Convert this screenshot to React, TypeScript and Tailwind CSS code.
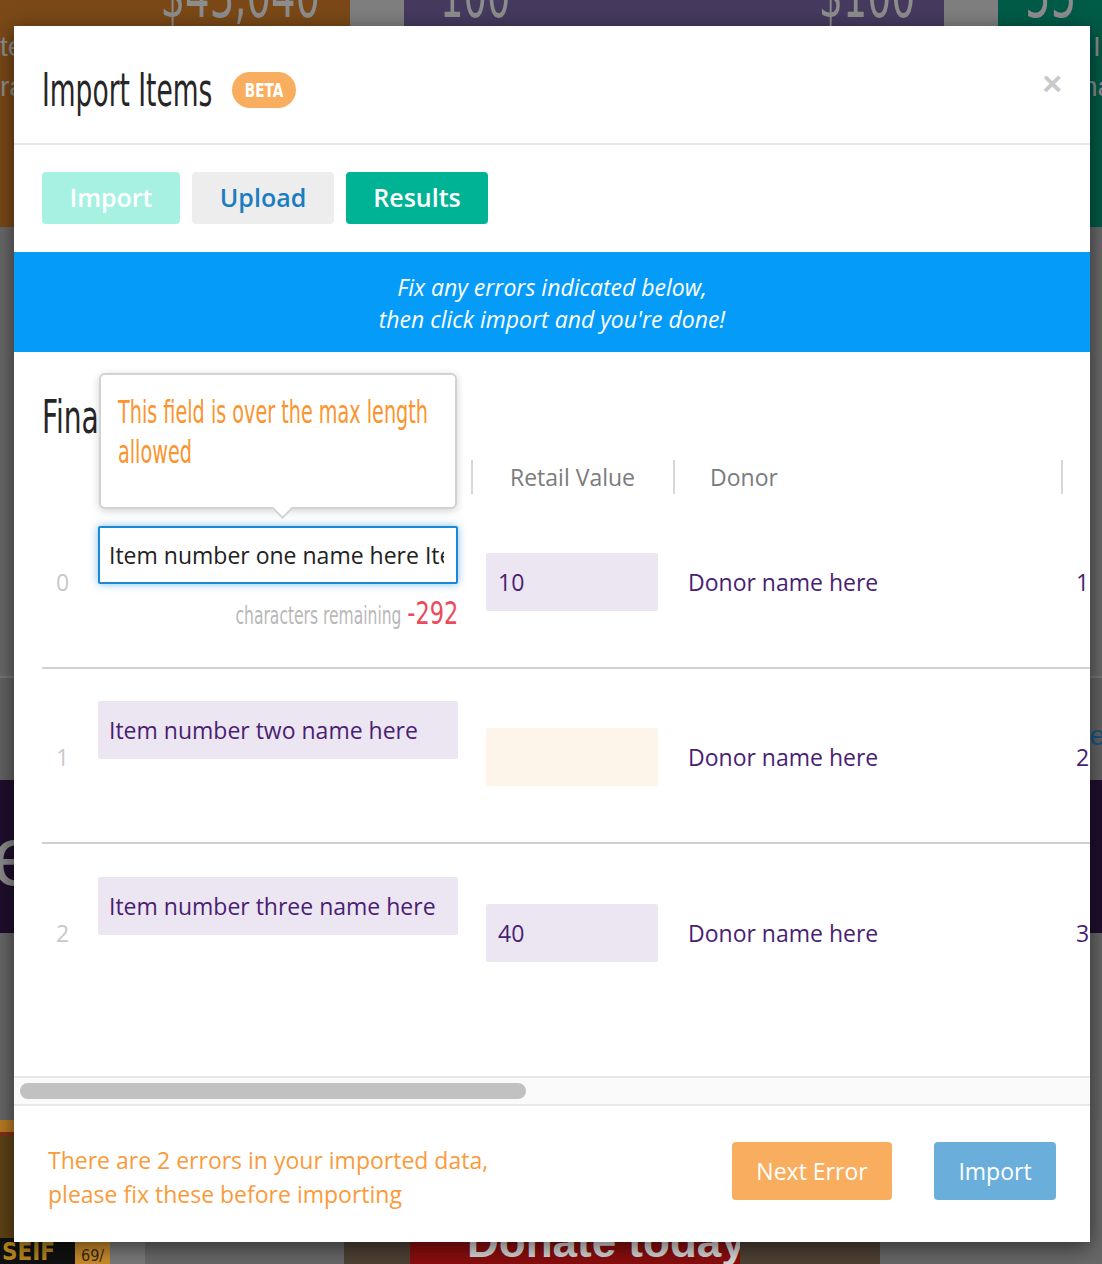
// Import Items modal (results step) shown over a dimmed dashboard page.

const sans = "font-['Open_Sans',sans-serif]";
const narrow = "font-['Liberation_Sans_Narrow','DejaVu_Sans_Condensed','Liberation_Sans',sans-serif]";

interface ImportRow {
  index: number
  name: string
  value: string
  valueTone: 'lavender' | 'cream'
  donor: string
  quantity: string
  overLimit?: number
}

const rows: ImportRow[] = [
  {
    index: 0,
    name: 'Item number one name here Item number one name here Item number one name here',
    value: '10',
    valueTone: 'lavender',
    donor: 'Donor name here',
    quantity: '1',
    overLimit: -292,
  },
  { index: 1, name: 'Item number two name here', value: '', valueTone: 'cream', donor: 'Donor name here', quantity: '2' },
  { index: 2, name: 'Item number three name here', value: '40', valueTone: 'lavender', donor: 'Donor name here', quantity: '3' },
]

function BackgroundPage() {
  // the dashboard behind the overlay; only its edges show around the modal
  return (
    <div className={`${narrow} flex h-full flex-col text-[#8d8d8d]`}>
      <div className="flex h-[230px]">
        <div className="flex w-[350px] shrink-0 flex-col bg-[#7a4917]">
          <div className="-mt-[37px] flex justify-end pr-[30px]">
            <span className="inline-block origin-right scale-x-[0.67] whitespace-nowrap text-[64px] leading-none">$43,040</span>
          </div>
          <div className="font-['Liberation_Sans',sans-serif] text-[28px] leading-[40px]">
            <div>te</div>
            <div>ra</div>
          </div>
        </div>
        <div className="w-[54px] shrink-0 bg-[#7f7f7f]" />
        <div className="flex w-[540px] shrink-0 justify-between bg-[#463a5f] pl-[36px] pr-[29px]">
          <span className="-mt-[37px] inline-block origin-left scale-x-[0.64] text-[64px] leading-none">100</span>
          <span className="-mt-[37px] inline-block origin-right scale-x-[0.66] text-[64px] leading-none">$100</span>
        </div>
        <div className="w-[54px] shrink-0 bg-[#7f7f7f]" />
        <div className="flex min-w-0 flex-1 flex-col overflow-hidden bg-[#005b47]">
          <div className="-mt-[37px] pl-[27px]">
            <span className="inline-block origin-left scale-x-[0.7] text-[64px] leading-none">55</span>
          </div>
          <div className="whitespace-nowrap font-['Liberation_Sans',sans-serif] text-[28px] leading-[40px]">
            <div className="pl-[95px]">I</div>
            <div className="pl-[84px]">na</div>
          </div>
        </div>
      </div>
      <div className="h-[455px] bg-[#686868]" />
      <div className="h-[2px] bg-[#767676]" />
      <div className="flex h-[103px] items-start justify-end bg-[#626262] pt-[44px]">
        <span className="-mr-[3px] font-['Liberation_Sans',sans-serif] text-[28px] leading-none text-[#155585]">e</span>
      </div>
      <div className="flex h-[155px] items-center bg-[#1f0e2e]">
        <span className="-ml-[8px] font-['Liberation_Sans',sans-serif] text-[84px] leading-none text-[#8a8a8a]">e</span>
      </div>
      <div className="h-[190px] bg-[#666666]" />
      <div className="flex flex-1">
        <div className="flex w-[75px] shrink-0 flex-col">
          <div className="h-[12px] bg-[#b87a22]" />
          <div className="h-[3px] bg-[#8a2a1a]" />
          <div className="flex-1 bg-[#5e4216]" />
          <div className="flex h-[26px] items-end bg-[#111] pl-[2px] text-[24px] font-bold leading-none text-[#b8861e]">SEIF</div>
        </div>
        <div className="flex w-[35px] shrink-0 items-end bg-[#c98a2c] pl-[6px] text-[16px] leading-none text-[#3a2a10]">69/</div>
        <div className="w-[35px] shrink-0 bg-[#7a7a7a]" />
        <div className="w-[199px] shrink-0 bg-[#686868]" />
        <div className="w-[66px] shrink-0 bg-[#4e4134]" />
        <div className="w-[330px] shrink-0 whitespace-nowrap bg-[#8a0d0d] pl-[57px] pt-[100px] font-['Liberation_Sans',sans-serif] text-[44px] font-bold leading-none text-[#d6d6d6]">
          Donate today
        </div>
        <div className="w-[140px] shrink-0 bg-[#4e4134]" />
        <div className="flex-1 bg-[#686868]" />
      </div>
    </div>
  )
}

function Tooltip() {
  return (
    <div className="absolute left-[85px] top-[21px] h-[136px] w-[358px] rounded-[6px] border-2 border-[#d2d2d2] bg-white pl-[17px] pt-[17px] shadow-[0_2px_8px_rgba(0,0,0,0.18)]">
      <div className={`${narrow} origin-left scale-x-[0.667] whitespace-nowrap text-[32px] leading-[40px] text-[#fa942e]`}>
        This field is over the max length
        <br />
        allowed
      </div>
      <div className="absolute -bottom-[9px] left-[174px] h-[15px] w-[15px] rotate-45 border-b-2 border-r-2 border-[#d2d2d2] bg-white" />
    </div>
  )
}

function TableRow({ row }: { row: ImportRow }) {
  const boxTone = row.valueTone === 'cream' ? 'bg-[#fdf4ea]' : 'bg-[#ece6f2]'
  return (
    <div className="flex h-[175px] items-center border-b-2 border-[#d0d0d0] pt-[3px] last:border-b-0">
      <div className="w-[41px] shrink-0 pl-[14px] text-[#c8c8c8]">{row.index}</div>
      <div className="flex w-[388px] shrink-0 flex-col pl-[15px] pr-[13px]">
        {row.overLimit !== undefined ? (
          <div className="flex h-[58px] items-center rounded-[2px] border-2 border-[#1b88d6] bg-white pl-[9px] pr-[12px] text-[#222] shadow-[0_0_8px_rgba(27,136,214,0.55)]">
            <div className="overflow-hidden whitespace-nowrap">{row.name}</div>
          </div>
        ) : (
          <div className="flex h-[58px] items-center whitespace-nowrap rounded-[2px] bg-[#ece6f2] pl-[11px] text-[#4a1e72]">
            {row.name}
          </div>
        )}
        <div className="flex h-[54px] items-baseline justify-end pt-[13px]">
          {row.overLimit !== undefined && (
            <>
              <span className={`${narrow} inline-block origin-right scale-x-[0.72] whitespace-nowrap text-[24px] text-[#b8b8b8]`}>
                characters remaining
              </span>
              <span className={`${narrow} -ml-[9px] inline-block origin-right scale-x-[0.78] text-[32px] leading-none text-[#ec4a5c]`}>
                {row.overLimit}
              </span>
            </>
          )}
        </div>
      </div>
      <div className="w-[202px] shrink-0 px-[15px]">
        <div className={`flex h-[58px] items-center rounded-[2px] pl-[12px] text-[#4a1e72] ${boxTone}`}>{row.value}</div>
      </div>
      <div className="w-[388px] shrink-0 pl-[15px] text-[#4a1e72]">{row.donor}</div>
      <div className="w-[150px] shrink-0 pl-[15px] text-[#4a1e72]">{row.quantity}</div>
    </div>
  )
}

function ImportModal() {
  return (
    <div className={`${sans} absolute left-[14px] top-[26px] flex h-[1216px] w-[1076px] flex-col bg-white shadow-[0_5px_20px_rgba(0,0,0,0.55)]`}>
      <div className="flex h-[119px] shrink-0 items-start border-b-2 border-[#e6e6e6] px-[28px]">
        <div className="mt-[41px] flex items-center gap-[19px]">
          <span className={`${narrow} inline-block w-[171px] origin-left scale-x-[0.64] whitespace-nowrap text-[46px] leading-none text-[#262626]`}>
            Import Items
          </span>
          <span className="flex h-[36px] w-[64px] items-center justify-center rounded-full bg-[#f9ae5f]">
            <span className={`${narrow} inline-block scale-x-[0.8] text-[19px] font-bold text-white`}>BETA</span>
          </span>
        </div>
        <button className="ml-auto mt-[40px] font-['Liberation_Sans',sans-serif] text-[34px] font-bold leading-none text-[#c9c9c9]">×</button>
      </div>

      <div className="flex shrink-0 gap-[12px] px-[28px] pb-[28px] pt-[27px] text-[25px] font-semibold">
        <button className="h-[52px] w-[138px] rounded-[4px] bg-[#a7f1e3] text-white">Import</button>
        <button className="h-[52px] w-[142px] rounded-[4px] bg-[#ededed] text-[#1b7dc0]">Upload</button>
        <button className="h-[52px] w-[142px] rounded-[4px] bg-[#00b395] text-white">Results</button>
      </div>

      <div className="flex h-[100px] shrink-0 flex-col items-center justify-center bg-[#049cf8] pt-[2px] text-[23px] italic leading-[32px] text-white">
        <p>Fix any errors indicated below,</p>
        <p>then click import and you're done!</p>
      </div>

      <div className="relative min-h-0 flex-1 overflow-hidden pl-[28px] text-[23px]">
        <div className={`${narrow} mt-[42px] w-[220px] origin-left scale-x-[0.68] whitespace-nowrap text-[46px] leading-none text-[#262626]`}>
          Final Review
        </div>
        <div className="mt-[20px] w-[1250px]">
          <div className="flex h-[34px] items-center text-[#7b7b7b]">
            <div className="w-[41px] shrink-0" />
            <div className="w-[388px] shrink-0 pl-[37px]">Item Name</div>
            <div className="flex h-full w-[202px] shrink-0 items-center border-l-2 border-[#d8d8d8] pl-[37px]">Retail Value</div>
            <div className="flex h-full w-[388px] shrink-0 items-center border-l-2 border-[#d8d8d8] pl-[35px]">Donor</div>
            <div className="flex h-full w-[150px] shrink-0 items-center border-l-2 border-[#d8d8d8] pl-[37px]">Quantity</div>
          </div>
          {rows.map((row) => (
            <TableRow key={row.index} row={row} />
          ))}
        </div>
        <Tooltip />
      </div>

      <div className="flex h-[30px] shrink-0 items-center border-y-2 border-[#e8e8e8] bg-[#fafafa] pl-[6px]">
        <div className="h-[16px] w-[506px] rounded-full bg-[#c1c1c1]" />
      </div>

      <div className="flex h-[136px] shrink-0 items-center px-[34px]">
        <p className="mt-[6px] text-[23px] leading-[34px] text-[#fa9b3b]">
          There are 2 errors in your imported data,
          <br />
          please fix these before importing
        </p>
        <div className="-mt-[6px] ml-auto flex gap-[42px] text-[23px] text-white">
          <button className="h-[58px] w-[160px] rounded-[4px] bg-[#f9ae5f]">Next Error</button>
          <button className="h-[58px] w-[122px] rounded-[4px] bg-[#6aafdc]">Import</button>
        </div>
      </div>
    </div>
  )
}

export default function App() {
  return (
    <div className="relative h-[1264px] w-[1102px] overflow-hidden bg-[#686868]">
      <BackgroundPage />
      <ImportModal />
    </div>
  )
}
